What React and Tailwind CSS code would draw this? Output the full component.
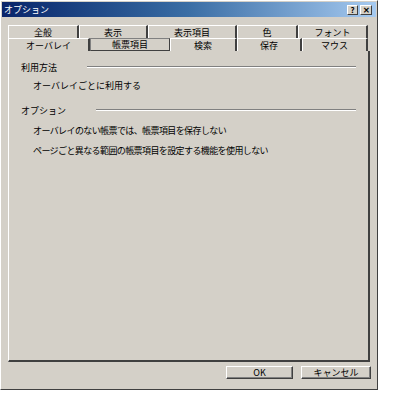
import React from 'react'

const font = { fontFamily: '"MS UI Gothic", "Noto Sans CJK JP", sans-serif' }

const row1 = [
  { label: '全般', w: 'w-[71px]' },
  { label: '表示', w: 'w-[69px]' },
  { label: '表示項目', w: 'w-[89px]' },
  { label: '色', w: 'w-[61px]' },
  { label: 'フォント', w: 'w-[70px]' },
]

const row2 = [
  { label: 'オーバレイ', w: 'w-[82px]' },
  { label: '帳票項目', w: 'w-[80px]', active: true },
  { label: '検索', w: 'w-[67px]' },
  { label: '保存', w: 'w-[65px]' },
  { label: 'マウス', w: 'w-[66px]' },
]

function Tab({ label, w, active }) {
  if (active) {
    return (
      <div className={`${w} h-[13px] flex items-center justify-center border border-[#404040] border-t-[#808080] border-l-[#808080] bg-[#d4d0c8] text-[9px] leading-none text-black`}>
        {label}
      </div>
    )
  }
  return (
    <div className={`${w} h-[13px] flex items-center justify-center border-l border-t border-r-2 border-l-white border-t-white border-r-[#404040] text-[9px] leading-none text-black`}>
      {label}
    </div>
  )
}

function Heading({ children }) {
  return (
    <div className="flex items-center h-[14px]">
      <span className="text-[9px] leading-none">{children}</span>
      <div className="flex-1 ml-[30px] flex flex-col">
        <div className="h-px bg-[#808080]" />
        <div className="h-px bg-white" />
      </div>
    </div>
  )
}

function Btn({ children, w }) {
  return (
    <div className={`${w} h-[13px] flex items-center justify-center border border-t-white border-l-white border-r-[#404040] border-b-[#404040] shadow-[inset_-1px_-1px_0_#808080] text-[9px] leading-none`}>
      {children}
    </div>
  )
}

export default function App() {
  return (
    <div className="w-[396px] h-[396px] bg-white" style={font}>
      <div className="w-[378px] h-[390px] bg-[#d4d0c8] border-l border-t border-l-white border-t-white border-r border-b border-r-[#404040] border-b-[#404040] flex flex-col">
        {/* title bar */}
        <div className="h-[15px] mx-px mt-px flex items-center justify-between bg-gradient-to-r from-[#0a246a] via-[#3a6ea5] to-[#a6caf0] pl-[2px] pr-[4px]">
          <span className="text-white text-[9px] leading-none">オプション</span>
          <div className="flex gap-[2px]">
            <div className="w-[11px] h-[10px] bg-[#d4d0c8] border border-t-white border-l-white border-r-[#404040] border-b-[#404040] flex items-center justify-center text-[8px] font-bold leading-none">?</div>
            <div className="w-[12px] h-[10px] bg-[#d4d0c8] border border-t-white border-l-white border-r-[#404040] border-b-[#404040] flex items-center justify-center text-[8px] font-bold leading-none">✕</div>
          </div>
        </div>

        {/* tabs */}
        <div className="ml-[7px] mt-[8px] flex">
          {row1.map((t) => <Tab key={t.label} {...t} />)}
        </div>
        <div className="ml-[7px] flex">
          {row2.map((t) => <Tab key={t.label} {...t} />)}
        </div>

        {/* panel */}
        <div className="ml-[7px] w-[362px] h-[311px] border-l border-l-white border-r-2 border-b-2 border-r-[#404040] border-b-[#404040] pl-[12px] pr-[12px] pt-[9px]">
          <Heading>利用方法</Heading>
          <div className="pl-[12px] mt-[4px] text-[9px] leading-none h-[14px] flex items-center">オーバレイごとに利用する</div>
          <div className="mt-[11px]">
            <Heading>オプション</Heading>
          </div>
          <div className="pl-[12px] mt-[6px] text-[9px] leading-none h-[14px] flex items-center tracking-[-0.6px]">オーバレイのない帳票では、帳票項目を保存しない</div>
          <div className="pl-[12px] mt-[6px] text-[9px] leading-none h-[14px] flex items-center tracking-[-0.6px]">ページごと異なる範囲の帳票項目を設定する機能を使用しない</div>
        </div>

        {/* buttons */}
        <div className="flex justify-end gap-[8px] pr-[6px] mt-[4px]">
          <Btn w="w-[67px]">OK</Btn>
          <Btn w="w-[70px]">キャンセル</Btn>
        </div>
      </div>
    </div>
  )
}
